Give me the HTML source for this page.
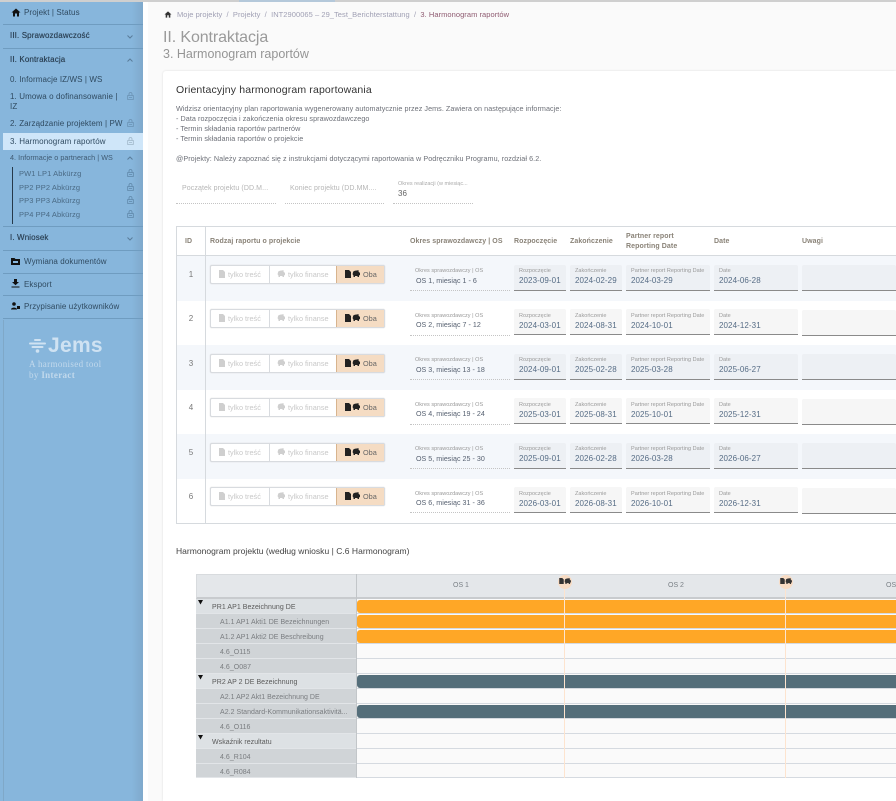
<!DOCTYPE html>
<html><head><meta charset="utf-8"><style>
*{box-sizing:border-box}
html,body{margin:0;padding:0;width:896px;height:801px;overflow:hidden;background:#fafafa;font-family:"Liberation Sans",sans-serif;color:#555}
#p{position:absolute;left:0;top:0;width:896px;height:801px;overflow:hidden;filter:blur(.35px)}
div,span.a{position:absolute;white-space:nowrap}
svg{position:absolute;overflow:visible}
.s{left:10px;font-size:8px;color:#2f4a60;letter-spacing:.1px;margin-top:1px}
.b{left:10px;font-size:8px;color:#2c4256;letter-spacing:.12px;text-shadow:0 0 .4px #2c4256;margin-top:1px}
.h{left:3px;width:140px;height:1px;background:#6f9cc0}
.pw{left:19px;font-size:7.5px;color:#4a6a85;letter-spacing:.1px}
.rb{left:177px;width:719px;height:45px}
.id{left:177px;width:28px;text-align:center;font-size:8px;color:#777}
.tg{left:210px;width:175px;height:19px;border:1px solid #d8dbdf;border-radius:2px;background:#fff;box-shadow:0 0 1px #ccc}
.tg i{position:absolute;top:0;height:17px;display:block}
.t1{font-size:7.3px;color:#c8c8c8}
.t2{font-size:7.3px;color:#666}
.l{font-size:5.5px;color:#999;letter-spacing:.03px}
.v{font-size:8px;color:#566c85;letter-spacing:.08px}
.o{font-size:7.1px;color:#566070;letter-spacing:.03px;margin-top:1px}
.d{height:1px;border-bottom:1px dotted #c4c4c4}
.f{height:26px;border-bottom:1px solid #8a8a8a;border-radius:2px 2px 0 0}
.th{font-size:7px;font-weight:bold;color:#8a8378;letter-spacing:.08px;margin-top:2px}
.gl{left:196px;width:160px;height:15px;border-bottom:1px solid #e2e5e8}
.gr{left:357px;width:539px;height:15px;background:#fafafa;border-bottom:1px solid #d5dae0}
.gt{font-size:7px;letter-spacing:.03px;color:#7a7d80;margin-top:2px}
.gg{font-size:7px;letter-spacing:.05px;color:#5a5a5a;margin-top:2px}
.bar{left:357px;width:539px;height:13px;border-radius:3px 0 0 3px}
.m{width:1px;top:580px;height:198px;background:#fde4cf}
</style></head><body>
<svg width="0" height="0" style="left:0;top:0"><defs>
<symbol id="lk" viewBox="0 0 7 8"><path d="M2 3.5V2a1.5 1.5 0 0 1 3 0V3.5M.7 3.5H6.3V7.5H.7ZM2 5.5H5" fill="none" stroke="currentColor" stroke-width=".8"/></symbol>
<symbol id="dc" viewBox="0 0 6 8"><path d="M0 0H4L6 2V8H0Z" fill="currentColor"/></symbol>
<symbol id="pg" viewBox="0 0 8 7"><path d="M1 2.5C1 1 3 .5 5 .5L6.5 0V1.5L8 3V5L7 5.5V7H5.5V6H3V7H1.5V5.5C.5 5 .5 3.5 1 2.5Z" fill="currentColor"/></symbol>
</defs></svg>
<div id="p">

<!-- sidebar -->
<div style="left:0;top:0;width:143px;height:801px;background:linear-gradient(90deg,#87b6dc 0,#87b6dc 92%,#7fa9cc 100%)"></div>
<div style="left:3px;top:320px;width:1px;height:481px;background:#7fa8c8"></div>
<div style="left:0;top:0;width:896px;height:2px;background:#cfcfcf"></div>
<div style="left:239px;top:0;width:96px;height:2px;background:#b4c8da"></div>
<div style="left:143px;top:2px;width:5px;height:799px;background:#fff"></div>

<svg style="left:11px;top:8px" width="10" height="9" viewBox="0 0 10 9"><path d="M5 0.5 L0.5 4.5 H2 V8.5 H4 V5.5 H6 V8.5 H8 V4.5 H9.5Z" fill="#111"/></svg>
<div class="s" style="left:24px;top:7px">Projekt | Status</div>
<div class="h" style="top:24px"></div>
<div class="b" style="top:30px">III. Sprawozdawczość</div>
<svg style="left:127px;top:35px" width="6" height="4"><path d="M.5 .5 L3 3 L5.5 .5" fill="none" stroke="#5a7d9a"/></svg>
<div class="h" style="top:48px"></div>
<div class="b" style="top:54px">II. Kontraktacja</div>
<svg style="left:127px;top:58px" width="6" height="4"><path d="M.5 3.5 L3 1 L5.5 3.5" fill="none" stroke="#5a7d9a"/></svg>
<div class="s" style="top:74px">0. Informacje IZ/WS | WS</div>
<div class="s" style="top:91px">1. Umowa o dofinansowanie |</div>
<div class="s" style="top:101px">IZ</div>
<div class="s" style="top:118px">2. Zarządzanie projektem | PW</div>
<div style="left:3px;top:133px;width:140px;height:17px;background:#cfe6f9"></div>
<div class="s" style="top:136px">3. Harmonogram raportów</div>
<div class="b" style="top:152px;font-size:7.2px;letter-spacing:.05px;color:#3f5a72;text-shadow:none">4. Informacje o partnerach | WS</div>
<svg style="left:127px;top:156px" width="6" height="4"><path d="M.5 3.5 L3 1 L5.5 3.5" fill="none" stroke="#5a7d9a"/></svg>
<div style="left:12px;top:167px;width:1px;height:57px;background:#26394a"></div>
<div class="pw" style="top:169px">PW1 LP1 Abkürzg</div>
<div class="pw" style="top:183px">PP2 PP2 Abkürzg</div>
<div class="pw" style="top:196px">PP3 PP3 Abkürzg</div>
<div class="pw" style="top:210px">PP4 PP4 Abkürzg</div>
<svg style="left:127px;top:92px;color:#6a91b2" width="7" height="8"><use href="#lk"/></svg>
<svg style="left:127px;top:119px;color:#6a91b2" width="7" height="8"><use href="#lk"/></svg>
<svg style="left:127px;top:137px;color:#9fb6c8" width="7" height="8"><use href="#lk"/></svg>
<svg style="left:127px;top:169px;color:#5f87a8" width="7" height="8"><use href="#lk"/></svg>
<svg style="left:127px;top:183px;color:#5f87a8" width="7" height="8"><use href="#lk"/></svg>
<svg style="left:127px;top:196px;color:#5f87a8" width="7" height="8"><use href="#lk"/></svg>
<svg style="left:127px;top:210px;color:#5f87a8" width="7" height="8"><use href="#lk"/></svg>
<div class="h" style="top:226px"></div>
<div class="b" style="top:232px">I. Wniosek</div>
<svg style="left:127px;top:237px" width="6" height="4"><path d="M.5 .5 L3 3 L5.5 .5" fill="none" stroke="#5a7d9a"/></svg>
<div class="h" style="top:250px"></div>
<svg style="left:11px;top:258px" width="9" height="7"><path d="M0 0H3.5L4.5 1H9V7H0Z" fill="#111"/><rect x="2" y="3" width="5" height="2" fill="#87b6dc"/></svg>
<div class="s" style="left:24px;top:256px">Wymiana dokumentów</div>
<div class="h" style="top:273px"></div>
<svg style="left:11px;top:279px" width="9" height="9"><path d="M3 0H6V3H8L4.5 6.3L1 3H3ZM.5 7.5H8.5V8.5H.5Z" fill="#111"/></svg>
<div class="s" style="left:24px;top:279px">Eksport</div>
<div class="h" style="top:295px"></div>
<svg style="left:11px;top:302px" width="9" height="8"><circle cx="3" cy="2" r="1.8" fill="#111"/><path d="M0 7.5C0 5 6 5 6 7.5Z" fill="#111"/><rect x="6" y="4" width="3" height="3" fill="#111"/></svg>
<div class="s" style="left:24px;top:301px">Przypisanie użytkowników</div>
<div class="h" style="top:318px"></div>

<svg style="left:29px;top:339px" width="17" height="15"><path d="M6 1H11M1 4.5H16M3.5 8H13.5" stroke="#cfe2f2" stroke-width="2" stroke-linecap="round"/><circle cx="8.5" cy="12" r="1.8" fill="#cfe2f2"/></svg>
<div style="left:48px;top:334px;font-size:21px;font-weight:bold;color:#cfe2f2;letter-spacing:.3px">Jems</div>
<div style="left:29px;top:359px;font-family:'Liberation Serif',serif;font-size:9px;color:#c2d9ec;letter-spacing:.35px">A harmonised tool</div>
<div style="left:29px;top:370px;font-family:'Liberation Serif',serif;font-size:9px;color:#c2d9ec;letter-spacing:.35px">by <b>Interact</b></div>

<!-- breadcrumb -->
<svg style="left:164px;top:11px" width="8" height="7" viewBox="0 0 10 9"><path d="M5 0.5 L0.5 4.5 H2 V8.5 H4 V5.5 H6 V8.5 H8 V4.5 H9.5Z" fill="#333"/></svg>
<div style="left:177px;top:10px;font-size:7.5px;color:#a0a0b4;letter-spacing:.05px">Moje projekty&nbsp; /&nbsp; Projekty&nbsp; /&nbsp; INT2900065 – 29_Test_Berichterstattung&nbsp; /&nbsp; <span style="color:#8e5a70">3. Harmonogram raportów</span></div>
<div style="left:163px;top:29px;font-size:16px;color:#9a9a9a;letter-spacing:-.1px">II. Kontraktacja</div>
<div style="left:163px;top:47px;font-size:12.5px;color:#959595">3. Harmonogram raportów</div>

<!-- card -->
<div style="left:163px;top:71px;width:733px;height:730px;background:#fff;border-radius:3px 0 0 0;box-shadow:0 0 2px #ddd"></div>
<div style="left:176px;top:84px;font-size:10.5px;color:#333;letter-spacing:.15px">Orientacyjny harmonogram raportowania</div>
<div style="left:176px;top:104px;font-size:7.2px;line-height:10px;color:#6d7078;letter-spacing:.06px;white-space:pre">Widzisz orientacyjny plan raportowania wygenerowany automatycznie przez Jems. Zawiera on następujące informacje:
- Data rozpoczęcia i zakończenia okresu sprawozdawczego
- Termin składania raportów partnerów
- Termin składania raportów o projekcie

@Projekty: Należy zapoznać się z instrukcjami dotyczącymi raportowania w Podręczniku Programu, rozdział 6.2.</div>
<div style="left:182px;top:185px;font-size:7px;color:#b5b5b5;letter-spacing:.1px">Początek projektu (DD.M...</div>
<div style="left:290px;top:185px;font-size:7px;color:#b5b5b5;letter-spacing:.1px">Koniec projektu (DD.MM....</div>
<div class="d" style="left:176px;top:203px;width:100px"></div>
<div class="d" style="left:285px;top:203px;width:99px"></div>
<div class="l" style="left:398px;top:181px;color:#aaa;letter-spacing:0">Okres realizacji (w miesiąc...</div>
<div style="left:398px;top:189px;font-size:8px;color:#666">36</div>
<div class="d" style="left:393px;top:203px;width:80px"></div>

<!-- table -->
<div style="left:176px;top:226px;width:720px;height:298px;border:1px solid #d6dade;border-right:0"></div>
<div class="rb" style="top:256px;background:#f4f7fb"></div>
<div class="rb" style="top:345px;background:#f4f7fb"></div>
<div class="rb" style="top:434px;background:#f4f7fb"></div>
<div style="left:177px;top:255px;width:719px;height:1px;background:#d6dade"></div>
<div style="left:205px;top:227px;width:1px;height:296px;background:#d6dade"></div>
<div class="th" style="left:185px;top:236px">ID</div>
<div class="th" style="left:210px;top:236px">Rodzaj raportu o projekcie</div>
<div class="th" style="left:410px;top:236px">Okres sprawozdawczy | OS</div>
<div class="th" style="left:514px;top:236px">Rozpoczęcie</div>
<div class="th" style="left:570px;top:236px">Zakończenie</div>
<div class="th" style="left:626px;top:231px">Partner report</div>
<div class="th" style="left:626px;top:241px">Reporting Date</div>
<div class="th" style="left:714px;top:236px">Date</div>
<div class="th" style="left:802px;top:236px">Uwagi</div>

<!-- row 1 -->
<div class="id" style="top:270px">1</div>
<div class="tg" style="top:265px"><i style="left:58px;width:1px;background:#d8dbdf"></i><i style="left:125px;width:48px;background:#f5dcc3;border-left:1px solid #d8b48e"></i></div>
<svg style="left:219px;top:270px;color:#cfcfcf" width="6" height="8"><use href="#dc"/></svg><div class="t1" style="left:228px;top:270px">tylko treść</div>
<svg style="left:277px;top:270px;color:#cfcfcf" width="8" height="7"><use href="#pg"/></svg><div class="t1" style="left:288px;top:270px">tylko finanse</div>
<svg style="left:345px;top:270px;color:#222" width="6" height="8"><use href="#dc"/></svg><svg style="left:352px;top:270px;color:#222" width="8" height="7"><use href="#pg"/></svg><div class="t2" style="left:363px;top:270px">Oba</div>
<div class="l" style="left:415px;top:268px">Okres sprawozdawczy | OS</div><div class="o" style="left:416px;top:276px">OS 1, miesiąc 1 - 6</div><div class="d" style="left:410px;top:290px;width:100px"></div>
<div class="f" style="left:514px;top:265px;width:52px;background:#edf0f4"></div><div class="l" style="left:519px;top:268px">Rozpoczęcie</div><div class="v" style="left:519px;top:276px">2023-09-01</div>
<div class="f" style="left:570px;top:265px;width:52px;background:#edf0f4"></div><div class="l" style="left:575px;top:268px">Zakończenie</div><div class="v" style="left:575px;top:276px">2024-02-29</div>
<div class="f" style="left:626px;top:265px;width:84px;background:#edf0f4"></div><div class="l" style="left:631px;top:268px">Partner report Reporting Date</div><div class="v" style="left:631px;top:276px">2024-03-29</div>
<div class="f" style="left:714px;top:265px;width:84px;background:#edf0f4"></div><div class="l" style="left:719px;top:268px">Date</div><div class="v" style="left:719px;top:276px">2024-06-28</div>
<div class="f" style="left:802px;top:265px;width:94px;background:#edf0f4"></div>

<!-- row 2 -->
<div class="id" style="top:314px">2</div>
<div class="tg" style="top:309px"><i style="left:58px;width:1px;background:#d8dbdf"></i><i style="left:125px;width:48px;background:#f5dcc3;border-left:1px solid #d8b48e"></i></div>
<svg style="left:219px;top:314px;color:#cfcfcf" width="6" height="8"><use href="#dc"/></svg><div class="t1" style="left:228px;top:314px">tylko treść</div>
<svg style="left:277px;top:314px;color:#cfcfcf" width="8" height="7"><use href="#pg"/></svg><div class="t1" style="left:288px;top:314px">tylko finanse</div>
<svg style="left:345px;top:314px;color:#222" width="6" height="8"><use href="#dc"/></svg><svg style="left:352px;top:314px;color:#222" width="8" height="7"><use href="#pg"/></svg><div class="t2" style="left:363px;top:314px">Oba</div>
<div class="l" style="left:415px;top:313px">Okres sprawozdawczy | OS</div><div class="o" style="left:416px;top:320px">OS 2, miesiąc 7 - 12</div><div class="d" style="left:410px;top:335px;width:100px"></div>
<div class="f" style="left:514px;top:309px;width:52px;background:#f6f6f6"></div><div class="l" style="left:519px;top:313px">Rozpoczęcie</div><div class="v" style="left:519px;top:321px">2024-03-01</div>
<div class="f" style="left:570px;top:309px;width:52px;background:#f6f6f6"></div><div class="l" style="left:575px;top:313px">Zakończenie</div><div class="v" style="left:575px;top:321px">2024-08-31</div>
<div class="f" style="left:626px;top:309px;width:84px;background:#f6f6f6"></div><div class="l" style="left:631px;top:313px">Partner report Reporting Date</div><div class="v" style="left:631px;top:321px">2024-10-01</div>
<div class="f" style="left:714px;top:309px;width:84px;background:#f6f6f6"></div><div class="l" style="left:719px;top:313px">Date</div><div class="v" style="left:719px;top:321px">2024-12-31</div>
<div class="f" style="left:802px;top:310px;width:94px;background:#f6f6f6"></div>

<!-- row 3 -->
<div class="id" style="top:359px">3</div>
<div class="tg" style="top:354px"><i style="left:58px;width:1px;background:#d8dbdf"></i><i style="left:125px;width:48px;background:#f5dcc3;border-left:1px solid #d8b48e"></i></div>
<svg style="left:219px;top:359px;color:#cfcfcf" width="6" height="8"><use href="#dc"/></svg><div class="t1" style="left:228px;top:359px">tylko treść</div>
<svg style="left:277px;top:359px;color:#cfcfcf" width="8" height="7"><use href="#pg"/></svg><div class="t1" style="left:288px;top:359px">tylko finanse</div>
<svg style="left:345px;top:359px;color:#222" width="6" height="8"><use href="#dc"/></svg><svg style="left:352px;top:359px;color:#222" width="8" height="7"><use href="#pg"/></svg><div class="t2" style="left:363px;top:359px">Oba</div>
<div class="l" style="left:415px;top:357px">Okres sprawozdawczy | OS</div><div class="o" style="left:416px;top:365px">OS 3, miesiąc 13 - 18</div><div class="d" style="left:410px;top:379px;width:100px"></div>
<div class="f" style="left:514px;top:354px;width:52px;background:#edf0f4"></div><div class="l" style="left:519px;top:357px">Rozpoczęcie</div><div class="v" style="left:519px;top:365px">2024-09-01</div>
<div class="f" style="left:570px;top:354px;width:52px;background:#edf0f4"></div><div class="l" style="left:575px;top:357px">Zakończenie</div><div class="v" style="left:575px;top:365px">2025-02-28</div>
<div class="f" style="left:626px;top:354px;width:84px;background:#edf0f4"></div><div class="l" style="left:631px;top:357px">Partner report Reporting Date</div><div class="v" style="left:631px;top:365px">2025-03-28</div>
<div class="f" style="left:714px;top:354px;width:84px;background:#edf0f4"></div><div class="l" style="left:719px;top:357px">Date</div><div class="v" style="left:719px;top:365px">2025-06-27</div>
<div class="f" style="left:802px;top:354px;width:94px;background:#edf0f4"></div>

<!-- row 4 -->
<div class="id" style="top:403px">4</div>
<div class="tg" style="top:398px"><i style="left:58px;width:1px;background:#d8dbdf"></i><i style="left:125px;width:48px;background:#f5dcc3;border-left:1px solid #d8b48e"></i></div>
<svg style="left:219px;top:403px;color:#cfcfcf" width="6" height="8"><use href="#dc"/></svg><div class="t1" style="left:228px;top:403px">tylko treść</div>
<svg style="left:277px;top:403px;color:#cfcfcf" width="8" height="7"><use href="#pg"/></svg><div class="t1" style="left:288px;top:403px">tylko finanse</div>
<svg style="left:345px;top:403px;color:#222" width="6" height="8"><use href="#dc"/></svg><svg style="left:352px;top:403px;color:#222" width="8" height="7"><use href="#pg"/></svg><div class="t2" style="left:363px;top:403px">Oba</div>
<div class="l" style="left:415px;top:402px">Okres sprawozdawczy | OS</div><div class="o" style="left:416px;top:409px">OS 4, miesiąc 19 - 24</div><div class="d" style="left:410px;top:424px;width:100px"></div>
<div class="f" style="left:514px;top:398px;width:52px;background:#f6f6f6"></div><div class="l" style="left:519px;top:402px">Rozpoczęcie</div><div class="v" style="left:519px;top:410px">2025-03-01</div>
<div class="f" style="left:570px;top:398px;width:52px;background:#f6f6f6"></div><div class="l" style="left:575px;top:402px">Zakończenie</div><div class="v" style="left:575px;top:410px">2025-08-31</div>
<div class="f" style="left:626px;top:398px;width:84px;background:#f6f6f6"></div><div class="l" style="left:631px;top:402px">Partner report Reporting Date</div><div class="v" style="left:631px;top:410px">2025-10-01</div>
<div class="f" style="left:714px;top:398px;width:84px;background:#f6f6f6"></div><div class="l" style="left:719px;top:402px">Date</div><div class="v" style="left:719px;top:410px">2025-12-31</div>
<div class="f" style="left:802px;top:399px;width:94px;background:#f6f6f6"></div>

<!-- row 5 -->
<div class="id" style="top:448px">5</div>
<div class="tg" style="top:443px"><i style="left:58px;width:1px;background:#d8dbdf"></i><i style="left:125px;width:48px;background:#f5dcc3;border-left:1px solid #d8b48e"></i></div>
<svg style="left:219px;top:448px;color:#cfcfcf" width="6" height="8"><use href="#dc"/></svg><div class="t1" style="left:228px;top:448px">tylko treść</div>
<svg style="left:277px;top:448px;color:#cfcfcf" width="8" height="7"><use href="#pg"/></svg><div class="t1" style="left:288px;top:448px">tylko finanse</div>
<svg style="left:345px;top:448px;color:#222" width="6" height="8"><use href="#dc"/></svg><svg style="left:352px;top:448px;color:#222" width="8" height="7"><use href="#pg"/></svg><div class="t2" style="left:363px;top:448px">Oba</div>
<div class="l" style="left:415px;top:446px">Okres sprawozdawczy | OS</div><div class="o" style="left:416px;top:454px">OS 5, miesiąc 25 - 30</div><div class="d" style="left:410px;top:468px;width:100px"></div>
<div class="f" style="left:514px;top:443px;width:52px;background:#edf0f4"></div><div class="l" style="left:519px;top:446px">Rozpoczęcie</div><div class="v" style="left:519px;top:454px">2025-09-01</div>
<div class="f" style="left:570px;top:443px;width:52px;background:#edf0f4"></div><div class="l" style="left:575px;top:446px">Zakończenie</div><div class="v" style="left:575px;top:454px">2026-02-28</div>
<div class="f" style="left:626px;top:443px;width:84px;background:#edf0f4"></div><div class="l" style="left:631px;top:446px">Partner report Reporting Date</div><div class="v" style="left:631px;top:454px">2026-03-28</div>
<div class="f" style="left:714px;top:443px;width:84px;background:#edf0f4"></div><div class="l" style="left:719px;top:446px">Date</div><div class="v" style="left:719px;top:454px">2026-06-27</div>
<div class="f" style="left:802px;top:443px;width:94px;background:#edf0f4"></div>

<!-- row 6 -->
<div class="id" style="top:492px">6</div>
<div class="tg" style="top:487px"><i style="left:58px;width:1px;background:#d8dbdf"></i><i style="left:125px;width:48px;background:#f5dcc3;border-left:1px solid #d8b48e"></i></div>
<svg style="left:219px;top:492px;color:#cfcfcf" width="6" height="8"><use href="#dc"/></svg><div class="t1" style="left:228px;top:492px">tylko treść</div>
<svg style="left:277px;top:492px;color:#cfcfcf" width="8" height="7"><use href="#pg"/></svg><div class="t1" style="left:288px;top:492px">tylko finanse</div>
<svg style="left:345px;top:492px;color:#222" width="6" height="8"><use href="#dc"/></svg><svg style="left:352px;top:492px;color:#222" width="8" height="7"><use href="#pg"/></svg><div class="t2" style="left:363px;top:492px">Oba</div>
<div class="l" style="left:415px;top:491px">Okres sprawozdawczy | OS</div><div class="o" style="left:416px;top:498px">OS 6, miesiąc 31 - 36</div><div class="d" style="left:410px;top:512px;width:100px"></div>
<div class="f" style="left:514px;top:487px;width:52px;background:#f6f6f6"></div><div class="l" style="left:519px;top:491px">Rozpoczęcie</div><div class="v" style="left:519px;top:499px">2026-03-01</div>
<div class="f" style="left:570px;top:487px;width:52px;background:#f6f6f6"></div><div class="l" style="left:575px;top:491px">Zakończenie</div><div class="v" style="left:575px;top:499px">2026-08-31</div>
<div class="f" style="left:626px;top:487px;width:84px;background:#f6f6f6"></div><div class="l" style="left:631px;top:491px">Partner report Reporting Date</div><div class="v" style="left:631px;top:499px">2026-10-01</div>
<div class="f" style="left:714px;top:487px;width:84px;background:#f6f6f6"></div><div class="l" style="left:719px;top:491px">Date</div><div class="v" style="left:719px;top:499px">2026-12-31</div>
<div class="f" style="left:802px;top:488px;width:94px;background:#f6f6f6"></div>

<!-- gantt -->
<div style="left:176px;top:546px;font-size:8.5px;color:#444;letter-spacing:.03px">Harmonogram projektu (według wniosku | C.6 Harmonogram)</div>
<div style="left:196px;top:574px;width:700px;height:25px;background:#e4e7ea;border:1px solid #d8dbde;border-right:0;border-bottom:2px solid #c8cbce"></div>
<div style="left:356px;top:574px;width:1px;height:204px;background:#c2c6c9"></div>
<div style="left:453px;top:582px;font-size:7px;color:#7a8086">OS 1</div>
<div style="left:668px;top:582px;font-size:7px;color:#7a8086">OS 2</div>
<div style="left:886px;top:582px;font-size:7px;color:#7a8086">OS</div>

<div class="gl" style="top:599px;background:#dde1e4"></div>
<div class="gl" style="top:614px;background:#d0d4d7"></div>
<div class="gl" style="top:629px;background:#d0d4d7"></div>
<div class="gl" style="top:644px;background:#d0d4d7"></div>
<div class="gl" style="top:659px;background:#d0d4d7"></div>
<div class="gl" style="top:674px;background:#dde1e4"></div>
<div class="gl" style="top:689px;background:#d0d4d7"></div>
<div class="gl" style="top:704px;background:#d0d4d7"></div>
<div class="gl" style="top:719px;background:#d0d4d7"></div>
<div class="gl" style="top:734px;background:#dde1e4"></div>
<div class="gl" style="top:749px;background:#d0d4d7"></div>
<div class="gl" style="top:764px;height:14px;background:#d0d4d7"></div>

<div class="gr" style="top:599px"></div><div class="gr" style="top:614px"></div><div class="gr" style="top:629px"></div><div class="gr" style="top:644px"></div><div class="gr" style="top:659px"></div><div class="gr" style="top:674px"></div><div class="gr" style="top:689px"></div><div class="gr" style="top:704px"></div><div class="gr" style="top:719px"></div><div class="gr" style="top:734px"></div><div class="gr" style="top:749px"></div><div class="gr" style="top:764px;height:14px"></div>

<div class="bar" style="top:600px;background:#ffa726"></div>
<div class="bar" style="top:615px;background:#ffa726"></div>
<div class="bar" style="top:630px;background:#ffa726"></div>
<div class="bar" style="top:675px;background:#546e7a"></div>
<div class="bar" style="top:705px;background:#546e7a"></div>

<svg style="left:198px;top:600px" width="5" height="5"><path d="M0 0H5L2.5 4.5Z" fill="#111"/></svg>
<svg style="left:198px;top:675px" width="5" height="5"><path d="M0 0H5L2.5 4.5Z" fill="#111"/></svg>
<svg style="left:198px;top:735px" width="5" height="5"><path d="M0 0H5L2.5 4.5Z" fill="#111"/></svg>
<div class="gg" style="left:212px;top:602px">PR1 AP1 Bezeichnung DE</div>
<div class="gt" style="left:220px;top:617px">A1.1 AP1 Akti1 DE Bezeichnungen</div>
<div class="gt" style="left:220px;top:632px">A1.2 AP1 Akti2 DE Beschreibung</div>
<div class="gt" style="left:220px;top:647px">4.6_O115</div>
<div class="gt" style="left:220px;top:662px">4.6_O087</div>
<div class="gg" style="left:212px;top:677px">PR2 AP 2 DE Bezeichnung</div>
<div class="gt" style="left:220px;top:692px">A2.1 AP2 Akt1 Bezeichnung DE</div>
<div class="gt" style="left:220px;top:707px">A2.2 Standard-Kommunikationsaktivitä...</div>
<div class="gt" style="left:220px;top:722px">4.6_O116</div>
<div class="gg" style="left:212px;top:737px">Wskaźnik rezultatu</div>
<div class="gt" style="left:220px;top:752px">4.6_R104</div>
<div class="gt" style="left:220px;top:767px">4.6_R084</div>

<div class="m" style="left:564px"></div>
<div class="m" style="left:785px"></div>
<div style="left:558px;top:575px;width:14px;height:14px;border-radius:50%;background:#f8dcc4"></div>
<div style="left:779px;top:575px;width:14px;height:14px;border-radius:50%;background:#f8dcc4"></div>
<svg style="left:559px;top:578px;color:#333" width="5" height="6"><use href="#dc"/></svg><svg style="left:564px;top:578px;color:#333" width="7" height="6"><use href="#pg"/></svg>
<svg style="left:780px;top:578px;color:#333" width="5" height="6"><use href="#dc"/></svg><svg style="left:785px;top:578px;color:#333" width="7" height="6"><use href="#pg"/></svg>
</div>
</body></html>
